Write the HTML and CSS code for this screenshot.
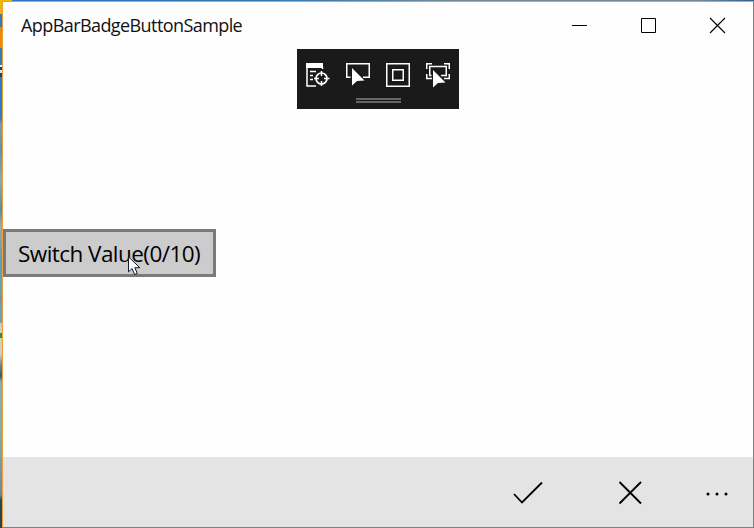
FILE: index.html
```html
<!DOCTYPE html>
<html lang="en">
<head>
<meta charset="utf-8">
<title>AppBarBadgeButtonSample</title>
<link rel="stylesheet" href="styles.css">
</head>
<body>
<div class="desktop">
  <main class="window">
    <header class="titlebar">
      <h1 class="title">AppBarBadgeButtonSample</h1>
      <div class="captions">
        <svg width="69" height="47"><path d="M26 23.500h15" stroke="#000"/></svg>
        <svg width="69" height="47"><path d="M26.500 16.500h14v14h-14z" fill="none" stroke="#000"/></svg>
        <svg width="69" height="47"><path d="M26 16l15 15M41 16L26 31" stroke="#000" stroke-width="1.1"/></svg>
      </div>
    </header>
    <section class="content">
      <div class="debugbar">
        <div class="tools">
          <svg width="24" height="24" viewBox="0 0 24 24" fill="none" stroke="#fff"><path d="M0 0h17v5H0z" fill="#fff" stroke="none"/><path d="M1 4v19h9M16.500 4v2M4 8.500h6M4 12.500h3M4 16.500h3" stroke-width="1.5"/><circle cx="15.500" cy="15.500" r="5.500" stroke-width="1.700"/><path d="M15.500 8v5M15.500 18v5M8 15.500h5M18 15.500h5.500" stroke-width="1.500"/></svg>
          <svg class="spill" width="24" height="24" viewBox="0 0 24 24" fill="none" stroke="#fff"><path d="M4.500 14.250H.75V.75h22.500v13.500H17" stroke-width="1.500"/><path d="M6 5v17.500l5-4.500 7.500-.5z" fill="#fff" stroke="none"/></svg>
          <svg width="24" height="24" viewBox="0 0 24 24" fill="none" stroke="#fff" stroke-width="1.500"><path d="M.75.75h22.500v22.500H.75zM6.750 6.750h10.500v10.500H6.750z"/></svg>
          <svg class="spill" width="24" height="24" viewBox="0 0 24 24" fill="none" stroke="#fff" stroke-width="1.500"><path d="M.75 6V.75H6M18 .75h5.250V6M.75 11v4.500H6M18 15.500h5.250V11M5.500 12.500H3.750v-9h16.500v9H15"/><path d="M7 7v17.500l5-4.500 7.500-.5z" fill="#fff" stroke="none"/></svg>
        </div>
        <div class="grip"></div>
      </div>
      <button class="switch"><span>Switch Value(0/10)</span></button>
    </section>
    <footer class="appbar">
      <svg width="102" height="70" viewBox="0 0 102 70"><path d="M37 37l8 8.500L65 25.500" fill="none" stroke="#000" stroke-width="1.800"/></svg>
      <svg width="102" height="70" viewBox="0 0 102 70"><path d="M40.500 25l21.500 21.500M62 25L40.500 46.500" stroke="#000" stroke-width="1.800"/></svg>
      <svg width="72" height="70" viewBox="0 0 72 70"><circle cx="27" cy="37" r="1.500"/><circle cx="36" cy="37" r="1.500"/><circle cx="45" cy="37" r="1.500"/></svg>
    </footer>
  </main>
  <svg class="pointer" width="14" height="20" viewBox="0 0 14 20"><path d="M.5.8v15l3.600-3.300 2.500 6 2.700-1.200-2.500-5.600h5z" fill="#fff" stroke="#15152b"/></svg>
</div>
</body>
</html>
```
FILE: styles.css
```css
* { box-sizing: border-box; }
body { margin: 0; overflow: hidden; }
svg { display: block; flex: none; }
.desktop {
  position: relative;
  width: 754px;
  height: 528px;
  padding: 1px 0 0 2px;
  background:
    linear-gradient(90deg, #f0b800 12px, #2875bc 12px, #3078b8 270px, #718b98 450px, #718b98 700px, #315f91) 0 0 / 754px 1px no-repeat,
    linear-gradient(#edb500 0 14px, #3478ba 14px 27px, #ed8606 27px 48px, #337abc 48px 65px, #eee 65px 67px, #184474 67px 70px, #ddd 70px 73px, #184474 73px 77px, #2b7dc2 77px 118px, #8499a8 125px, #5a8fbb 150px, #91a7b2 180px, #508dab 210px, #a7a6a0 226px, #55a0bd 260px, #65a4b8 292px, #8a8a9a 298px, #65a4b8 304px, #65a4b8 322px, #d4cdc5 324px 333px, #279b17 333px 338px, #d4cdc5 338px 354px, #778995 364px, #315d79 376px, #7bb0bd 382px, #87abaa 430px, #70869d 495px, #254765 500px, #333e43);
}
.window {
  width: 752px;
  height: 527px;
  display: flex;
  flex-direction: column;
  background: #fefefe;
  border: 1px solid #808080;
  border-top-color: #cfa36b;
  border-left-color: #eca035;
  font-family: "Open Sans", "Noto Sans", sans-serif;
}
.titlebar { height: 47px; flex: none; display: flex; justify-content: space-between; padding-left: 18px; }
.title { margin: 0; font-size: 18px; font-weight: 400; line-height: 47px; letter-spacing: -.58px; color: #111; white-space: nowrap; }
.captions { display: flex; }
.content { flex: 1; display: flex; flex-direction: column; align-items: flex-start; }
.debugbar { align-self: center; width: 162px; height: 60px; background: #1a1a1a; padding: 14px 9px 0; }
.tools { display: flex; gap: 16px; }
.spill { overflow: visible; }
.grip { width: 45px; height: 5px; margin: 11px auto 0 50px; border: solid #666; border-width: 2px 0; }
.switch { width: 213px; height: 48px; margin-top: 120px; padding: 2px 0 0 12px; border: 3px solid #7a7a7a; border-radius: 0; background: #ccc; color: #000; font: 22.5px/40px "Open Sans", "Noto Sans", sans-serif; letter-spacing: -.55px; text-align: left; white-space: nowrap; }
.appbar { height: 70px; flex: none; display: flex; justify-content: flex-end; background: #e4e4e4; }
.pointer { position: absolute; left: 128px; top: 256px; }
```
